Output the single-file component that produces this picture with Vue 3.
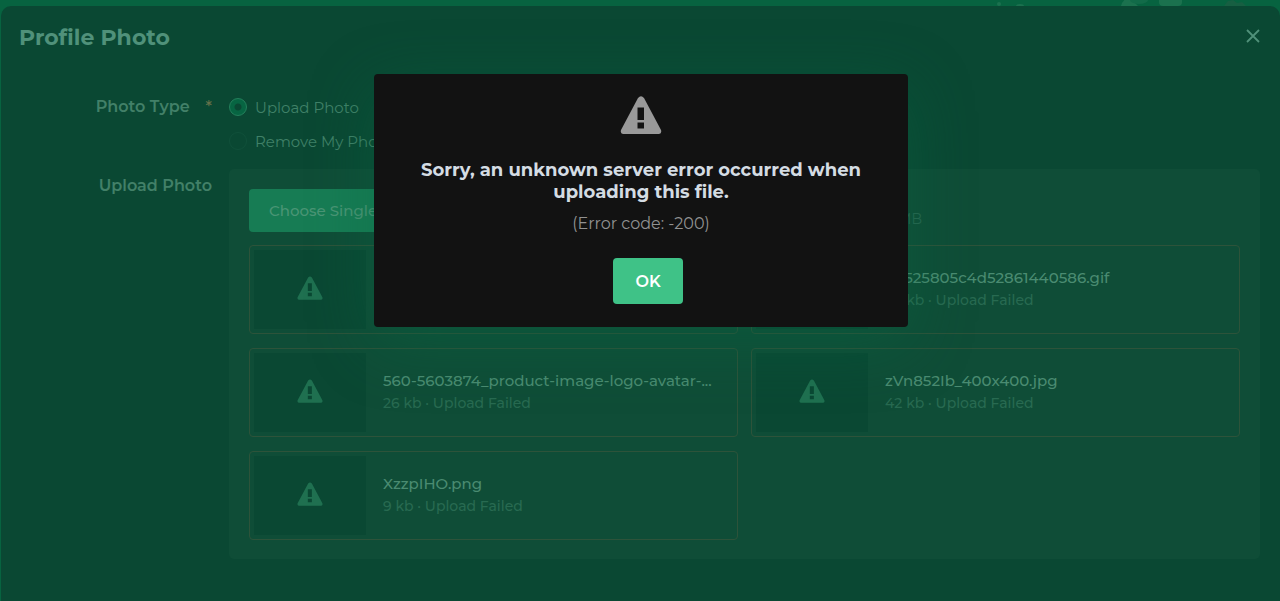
<script setup>
import { ref } from 'vue'

const photoType = ref('upload')
const files = [
  { name: '', size: '' },
  { name: 'e4525805c4d52861440586.gif', size: '42 kb' },
  { name: '560-5603874_product-image-logo-avatar-...', size: '26 kb' },
  { name: 'zVn852Ib_400x400.jpg', size: '42 kb' },
  { name: 'XzzpIHO.png', size: '9 kb' },
]
</script>

<template>
  <div class="page">
    <svg class="decor" viewBox="0 0 320 6" width="320" height="6" aria-hidden="true">
      <g fill="#1b714e">
        <circle cx="39" cy="4" r="2" />
        <ellipse cx="60" cy="6" rx="4" ry="2" />
        <path d="M161 6q1-5 6-8l7 4 4 4z" />
        <rect x="199" y="-4" width="23" height="10" rx="4" />
      </g>
      <ellipse cx="179" cy="0" rx="9" ry="4" fill="#126b49" />
      <path d="M264 6l4-5 5-1 4 3 5-1 4 4z" fill="#175f42" />
    </svg>

    <section class="sheet">
      <header class="sheet-head">
        <h1>Profile Photo</h1>
        <button class="close" type="button" aria-label="Close">
          <svg viewBox="0 0 14 14" width="14" height="14" fill="none" stroke="currentColor" stroke-width="1.8">
            <path d="M1 1l12 12M13 1L1 13" />
          </svg>
        </button>
      </header>

      <form class="form" @submit.prevent>
        <div id="type-label" class="label">Photo Type<span class="star">*</span></div>
        <div class="options" role="radiogroup" aria-labelledby="type-label">
          <label><input v-model="photoType" type="radio" name="type" value="upload" />Upload Photo</label>
          <label><input v-model="photoType" type="radio" name="type" value="remove" />Remove My Photo</label>
        </div>

        <div class="label">Upload Photo</div>
        <div class="panel">
          <div class="toolbar">
            <button class="choose" type="button">Choose Single File</button>
            <span class="hint">Max 2 MB</span>
          </div>
          <ul class="files">
            <li v-for="(file, i) in files" :key="i" class="file">
              <div class="thumb">
                <svg viewBox="0 0 42 38" width="26" height="24" fill="currentColor" aria-hidden="true">
                  <path fill-rule="evenodd" d="M18 2Q21-1.500 24 2L41 34Q42 37.500 39 38H3Q0 37.500 1 34ZM17.500 11.500V24H24V11.500ZM17.500 26.500V32.500H24V26.500Z" />
                </svg>
              </div>
              <div v-if="file.name" class="info">
                <div class="name">{{ file.name }}</div>
                <div class="meta">{{ file.size }} · Upload Failed</div>
              </div>
            </li>
          </ul>
        </div>
      </form>
    </section>

    <div class="overlay">
      <div class="dialog" role="alertdialog" aria-labelledby="dialog-title">
        <svg class="warning" viewBox="0 0 42 38" width="42" height="38" fill="currentColor" aria-hidden="true">
          <path fill-rule="evenodd" d="M18 2Q21-1.500 24 2L41 34Q42 37.500 39 38H3Q0 37.500 1 34ZM17.500 11.500V24H24V11.500ZM17.500 26.500V32.500H24V26.500Z" />
        </svg>
        <h2 id="dialog-title">Sorry, an unknown server error occurred when uploading this file.</h2>
        <p>(Error code: -200)</p>
        <button class="ok" type="button">OK</button>
      </div>
    </div>
  </div>
</template>

<style>
body {
  background: #066340;
}
</style>

<style scoped>
* {
  box-sizing: border-box;
}
.page {
  position: relative;
  min-height: 100vh;
  padding: 6px 0 0 1px;
  display: flex;
  background: #076340;
  font-family: Montserrat, Inter, "Liberation Sans", sans-serif;
  color: #47876d;
}
.decor {
  position: absolute;
  top: 0;
  right: 0;
}
.sheet {
  flex: 1;
  min-width: 0;
  padding: 16px 20px 40px 18px;
  border-radius: 10px 10px 0 0;
  background: #0a4833;
}
.sheet-head {
  display: flex;
  justify-content: space-between;
  height: 32px;
}
h1 {
  margin: 0;
  font-size: 22px;
  line-height: 32px;
  font-weight: 700;
  color: #50917a;
}
button {
  border: 0;
  font: inherit;
}
.close {
  display: flex;
  align-items: center;
  height: 28px;
  padding: 0;
  background: none;
  color: #50917a;
}
.form {
  display: grid;
  grid-template-columns: 193px minmax(0, 1fr);
  column-gap: 17px;
  padding-top: 36px;
}
.label {
  padding-top: 5px;
  text-align: right;
  font-size: 16px;
  line-height: 24px;
  font-weight: 600;
  color: #428068;
}
.star {
  margin-left: 16px;
  font-weight: 500;
  color: #66714a;
}
.options {
  display: grid;
  row-gap: 10px;
  padding-top: 5px;
  margin-bottom: 16px;
}
.options label {
  display: flex;
  align-items: center;
  height: 24px;
  gap: 8px;
  font-size: 15px;
  color: #408168;
}
.options input {
  appearance: none;
  width: 18px;
  height: 18px;
  margin: 0;
  border: 1px solid #10503a;
  border-radius: 50%;
}
.options input:checked {
  border-color: #23805b;
  background: radial-gradient(circle, #0a4833 0 3px, #076542 4px);
}
.panel {
  padding: 20px 20px 19px;
  border-radius: 5px;
  background: #0f4d37;
}
.toolbar {
  display: flex;
  justify-content: space-between;
  max-width: 673px;
  height: 43px;
  margin-bottom: 13px;
}
.choose {
  padding: 0 20px;
  border-radius: 4px;
  background: #177c54;
  color: #4a9575;
  font-size: 15px;
  font-weight: 500;
}
.hint {
  align-self: flex-end;
  font-size: 14px;
  line-height: 26px;
  color: #286650;
}
.files {
  display: grid;
  grid-template-columns: repeat(2, minmax(0, 1fr));
  gap: 14px 13px;
  margin: 0;
  padding: 0;
  list-style: none;
}
.file {
  display: flex;
  gap: 17px;
  min-width: 0;
  height: 89px;
  padding: 4px;
  border: 1px solid #2d533a;
  border-radius: 4px;
}
.thumb {
  display: flex;
  flex: 0 0 112px;
  align-items: center;
  justify-content: center;
  padding-bottom: 3px;
  background: #0a4833;
  color: #1f7050;
}
.info {
  flex: 1;
  min-width: 0;
  padding: 17px 11px 0 0;
}
.name,
.meta {
  overflow: hidden;
  line-height: 22px;
  text-overflow: ellipsis;
  white-space: nowrap;
}
.name {
  font-size: 15px;
  font-weight: 500;
  color: #4a8b71;
}
.meta {
  font-size: 14px;
  font-weight: 500;
  color: #286a51;
}
.overlay {
  position: absolute;
  inset: 0;
  display: flex;
  align-items: flex-start;
  justify-content: center;
  padding: 74px 0 0 2px;
}
.dialog {
  display: flex;
  flex-direction: column;
  align-items: center;
  width: 534px;
  max-width: 100%;
  padding: 22px 40px 23px;
  border-radius: 4px;
  background: #121212;
  box-shadow: 0 16px 64px rgba(7, 105, 67, 0.4);
  text-align: center;
}
.warning {
  color: #999;
}
h2 {
  margin: 25px 0 0;
  font-size: 18px;
  line-height: 22px;
  font-weight: 700;
  color: #d4dce3;
}
p {
  margin: 10px 0 23px;
  font-size: 16px;
  line-height: 22px;
  color: #919191;
}
.ok {
  width: 70px;
  height: 46px;
  margin-left: 14px;
  padding: 0;
  border-radius: 4px;
  background: #3fc287;
  color: #fff;
  font-size: 16px;
  font-weight: 600;
}
</style>
